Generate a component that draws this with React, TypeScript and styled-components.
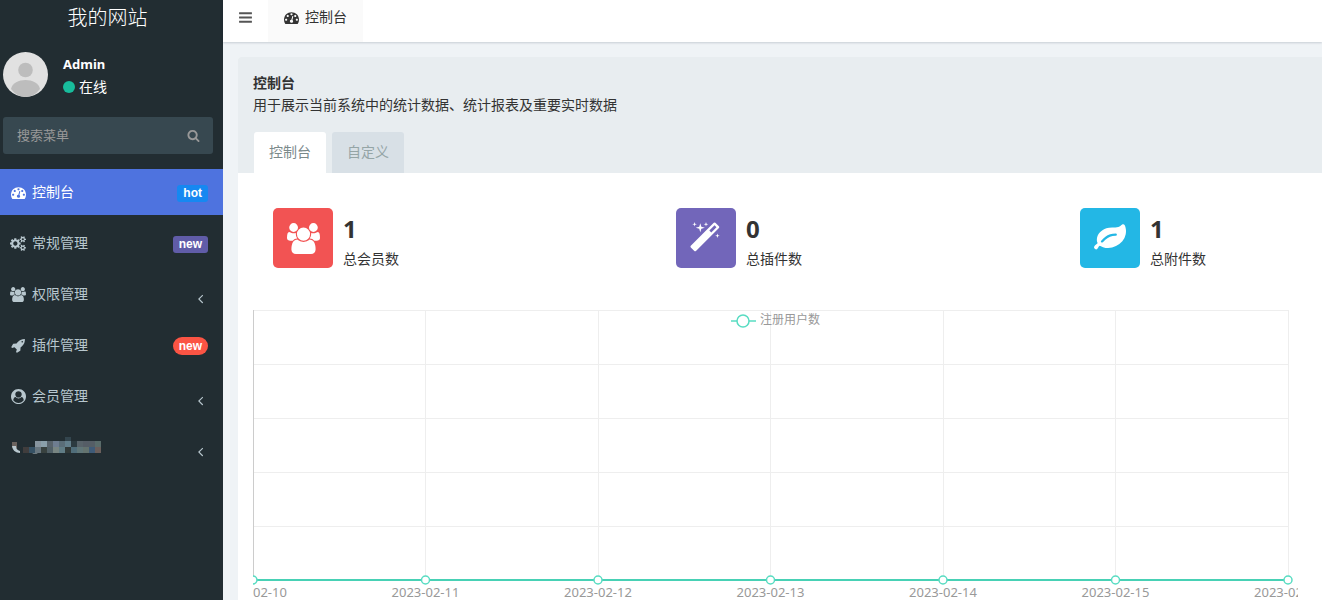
import React, { useEffect, useRef, useState } from "react";
import styled, { createGlobalStyle, css } from "styled-components";

const GlobalStyle = createGlobalStyle`
  * { box-sizing: border-box; }
  body {
    margin: 0;
    background: #eff3f6;
    color: #333;
    font-family: "Noto Sans", "Noto Sans CJK SC", sans-serif;
    font-size: 14px;
    line-height: 20px;
  }
  button, input { font-family: inherit; }
`;

const ICONS = {
  bars: "M1664 1344v128q0 26-19 45t-45 19h-1408q-26 0-45-19t-19-45v-128q0-26 19-45t45-19h1408q26 0 45 19t19 45zm0-512v128q0 26-19 45t-45 19h-1408q-26 0-45-19t-19-45v-128q0-26 19-45t45-19h1408q26 0 45 19t19 45zm0-512v128q0 26-19 45t-45 19h-1408q-26 0-45-19t-19-45v-128q0-26 19-45t45-19h1408q26 0 45 19t19 45z",
  search: "M1216 832q0-185-131.5-316.5t-316.5-131.5-316.5 131.5-131.5 316.5 131.5 316.5 316.5 131.5 316.5-131.5 131.5-316.5zm512 832q0 52-38 90t-90 38q-54 0-90-38l-343-342q-179 124-399 124-143 0-273.5-55.5t-225-150-150-225-55.5-273.5 55.5-273.5 150-225 225-150 273.5-55.5 273.5 55.5 225 150 150 225 55.5 273.5q0 220-124 399l343 343q37 37 37 90z",
  dashboard: "M384 1152q0-53-37.5-90.5t-90.5-37.5-90.5 37.5-37.5 90.5 37.5 90.5 90.5 37.5 90.5-37.5 37.5-90.5zm192-448q0-53-37.5-90.5t-90.5-37.5-90.5 37.5-37.5 90.5 37.5 90.5 90.5 37.5 90.5-37.5 37.5-90.5zm428 481l101-382q6-26-7.5-48.5t-38.5-29.5-48 6.5-30 39.5l-101 382q-60 5-107 43.5t-63 98.5q-20 77 20 146t117 89 146-20 89-117q16-60-6-117t-72-91zm660-33q0-53-37.5-90.5t-90.5-37.5-90.5 37.5-37.5 90.5 37.5 90.5 90.5 37.5 90.5-37.5 37.5-90.5zm-640-640q0-53-37.5-90.5t-90.5-37.5-90.5 37.5-37.5 90.5 37.5 90.5 90.5 37.5 90.5-37.5 37.5-90.5zm448 192q0-53-37.5-90.5t-90.5-37.5-90.5 37.5-37.5 90.5 37.5 90.5 90.5 37.5 90.5-37.5 37.5-90.5zm320 448q0 261-141 483-19 29-54 29h-1402q-35 0-54-29-141-221-141-483 0-182 71-348t191-286 286-191 348-71 348 71 286 191 191 286 71 348z",
  cogs: "M896 896q0-106-75-181t-181-75-181 75-75 181 75 181 181 75 181-75 75-181zm768 512q0-52-38-90t-90-38-90 38-38 90q0 53 37.5 90.5t90.5 37.5 90.5-37.5 37.5-90.5zm0-1024q0-52-38-90t-90-38-90 38-38 90q0 53 37.5 90.5t90.5 37.5 90.5-37.5 37.5-90.5zm-384 421v185q0 10-7 19.5t-16 10.5l-155 24q-11 35-32 76 34 48 90 115 7 10 7 20 0 12-7 19-23 30-82.5 89.5t-78.5 59.5q-11 0-21-7l-115-90q-37 19-77 31-11 108-23 155-7 24-30 24h-186q-11 0-20-7.5t-10-17.5l-23-153q-34-10-75-31l-118 89q-7 7-20 7-11 0-21-8-144-133-144-160 0-9 7-19 10-14 41-53t47-61q-23-44-35-82l-152-24q-10-1-17-9.5t-7-19.5v-185q0-10 7-19.5t16-10.5l155-24q11-35 32-76-34-48-90-115-7-11-7-20 0-12 7-20 22-30 82-89t79-59q11 0 21 7l115 90q34-18 77-32 11-108 23-154 7-24 30-24h186q11 0 20 7.5t10 17.5l23 153q34 10 75 31l118-89q8-7 20-7 11 0 21 8 144 133 144 160 0 9-7 19-12 16-42 54t-45 60q23 48 34 82l152 23q10 2 17 10.5t7 19.5zm640 533v140q0 16-149 31-12 27-30 52 51 113 51 138 0 4-4 7-122 71-124 71-8 0-46-47t-52-68q-20 2-30 2t-30-2q-14 21-52 68t-46 47q-2 0-124-71-4-3-4-7 0-25 51-138-18-25-30-52-149-15-149-31v-140q0-16 149-31 13-29 30-52-51-113-51-138 0-4 4-7 4-2 35-20t59-34 30-16q8 0 46 46.5t52 67.5q20-2 30-2t30 2q51-71 92-112l6-2q4 0 124 70 4 3 4 7 0 25-51 138 17 23 30 52 149 15 149 31zm0-1024v140q0 16-149 31-12 27-30 52 51 113 51 138 0 4-4 7-122 71-124 71-8 0-46-47t-52-68q-20 2-30 2t-30-2q-14 21-52 68t-46 47q-2 0-124-71-4-3-4-7 0-25 51-138-18-25-30-52-149-15-149-31v-140q0-16 149-31 13-29 30-52-51-113-51-138 0-4 4-7 4-2 35-20t59-34 30-16q8 0 46 46.5t52 67.5q20-2 30-2t30 2q51-71 92-112l6-2q4 0 124 70 4 3 4 7 0 25-51 138 17 23 30 52 149 15 149 31z",
  group: "M593 896q-162 5-265 128h-134q-82 0-138-40.5t-56-118.5q0-353 124-353 6 0 43.5 21t97.5 42.5 119 21.5q67 0 133-23-5 37-5 66 0 139 81 256zm1071 637q0 120-73 189.5t-194 69.5h-874q-121 0-194-69.5t-73-189.5q0-53 3.5-103.5t14-109 26.5-108.5 43-97.5 62-81 85.5-53.5 111.5-20q10 0 43 21.5t73 48 107 48 135 21.5 135-21.5 107-48 73-48 43-21.5q61 0 111.5 20t85.5 53.5 62 81 43 97.5 26.5 108.5 14 109 3.5 103.5zm-1024-1277q0 106-75 181t-181 75-181-75-75-181 75-181 181-75 181 75 75 181zm704 384q0 159-112.5 271.5t-271.5 112.5-271.5-112.5-112.5-271.5 112.5-271.5 271.5-112.5 271.5 112.5 112.5 271.5zm576 225q0 78-56 118.5t-138 40.5h-134q-103-123-265-128 81-117 81-256 0-29-5-66 66 23 133 23 59 0 119-21.5t97.5-42.5 43.5-21q124 0 124 353zm-128-609q0 106-75 181t-181 75-181-75-75-181 75-181 181-75 181 75 75 181z",
  rocket: "M1440 448q0-40-28-68t-68-28-68 28-28 68 28 68 68 28 68-28 28-68zm224-288q0 249-75.5 430.5t-253.5 360.5q-81 80-195 176l-20 379q-2 16-16 26l-384 224q-7 4-16 4-12 0-23-9l-64-64q-13-14-8-32l85-276-281-281-276 85q-3 1-9 1-14 0-23-9l-64-64q-17-19-5-39l224-384q10-14 26-16l379-20q96-114 176-195 188-187 358-258t431-71q14 0 24 9.5t10 22.5z",
  user: "M1523 1339q-22-155-87.5-257.5t-184.5-118.5q-67 74-159.5 115.5t-195.5 41.5-195.5-41.5-159.5-115.5q-119 16-184.5 118.5t-87.5 257.5q106 150 271 237.5t356 87.5 356-87.5 271-237.5zm-243-699q0-159-112.5-271.5t-271.5-112.5-271.5 112.5-112.5 271.5 112.5 271.5 271.5 112.5 271.5-112.5 112.5-271.5zm512 256q0 182-71 347.5t-190.5 286-285.5 191.5-349 71q-182 0-348-71t-286-191-191-286-71-348 71-348 191-286 286-191 348-71 348 71 286 191 191 286 71 348z",
  magic: "M1190 581l293-293-107-107-293 293zm447-293q0 27-18 45l-1286 1286q-18 18-45 18t-45-18l-198-198q-18-18-18-45t18-45l1286-1286q18-18 45-18t45 18l198 198q18 18 18 45zm-1351-190l98 30-98 30-30 98-30-98-98-30 98-30 30-98zm350 162l196 60-196 60-60 196-60-196-196-60 196-60 60-196zm930 478l98 30-98 30-30 98-30-98-98-30 98-30 30-98zm-640-640l98 30-98 30-30 98-30-98-98-30 98-30 30-98z",
  leaf: "M1280 704q0-26-19-45t-45-19q-172 0-318 49.5t-259.5 134-235.5 219.5q-19 21-19 45 0 26 19 45t45 19q24 0 45-19 27-24 74-71t67-66q137-124 268.5-176t313.5-52q26 0 45-19t19-45zm512-198q0 95-20 193-46 224-184.5 383t-357.5 268q-214 108-438 108-148 0-286-47-15-5-88-42t-96-37q-16 0-39.5 32t-45 70-52.5 70-60 32q-43 0-63.5-17.5t-45.5-59.5q-2-4-6-11t-5.5-10-3-9.5-1.5-13.5q0-35 31-73.5t68-65.5 68-56 31-48q0-4-14-38t-16-44q-9-51-9-104 0-115 43.5-220t119-184.5 170.5-139 204-95.5q55-18 145-25.5t179.5-9 178.5-6 163.5-24 113.5-56.5l29.5-29.5 29.5-28 27-20 36.5-16 43.5-4.5q39 0 70.5 46t47.5 112 24 124 8 96z",
  angle: "M1203 544q0 13-10 23l-393 393 393 393q10 10 10 23t-10 23l-50 50q-10 10-23 10t-23-10l-466-466q-10-10-10-23t10-23l466-466q10-10 23-10t23 10l50 50q10 10 10 23z",
};
type IconName = keyof typeof ICONS;

const IconSvg = styled.svg`
  display: block;
  flex: none;
  fill: currentColor;
`;

function Icon({ name, size = 14 }: { name: IconName; size?: number }) {
  const box = name === "cogs" || name === "group" ? 1920 : 1792;
  const width = Math.round((size * box) / 1792);
  return (
    <IconSvg width={width} height={size} viewBox={`0 0 ${box} 1792`} aria-hidden="true">
      <path d={ICONS[name]} />
    </IconSvg>
  );
}

const Page = styled.div`
  display: flex;
  min-height: 100vh;
`;

const Sidebar = styled.aside`
  flex: 0 0 223px;
  min-width: 0;
  background: #222d32;
  color: #fff;
`;

const Brand = styled.div`
  height: 52px;
  padding-right: 8px;
  text-align: center;
  font-size: 20px;
  font-weight: 300;
  line-height: 36px;
`;

const UserPanel = styled.div`
  display: flex;
  gap: 15px;
  height: 65px;
  padding-left: 3px;
`;

const Avatar = styled.svg`
  width: 45px;
  height: 45px;
  border-radius: 50%;
`;

const UserName = styled.div`
  font-size: 13px;
  font-weight: 700;
  line-height: 24px;
`;

const Status = styled.div`
  display: flex;
  align-items: center;
  gap: 4px;
  line-height: 22px;

  &::before {
    content: "";
    width: 12px;
    height: 12px;
    border-radius: 50%;
    background: #18bc9c;
  }
`;

const SearchForm = styled.form`
  display: flex;
  height: 37px;
  margin: 0 10px 15px 3px;
  border-radius: 3px;
  background: #374850;
  color: #999;
`;

const SearchInput = styled.input`
  flex: 1;
  min-width: 0;
  padding: 0 0 2px 14px;
  border: 0;
  outline: 0;
  background: transparent;
  color: #fff;
  font-size: 13px;

  &::placeholder { color: #999; }
`;

const SearchButton = styled.button`
  display: grid;
  place-items: center;
  width: 40px;
  padding: 0;
  border: 0;
  background: transparent;
  color: inherit;
`;

const Menu = styled.nav`
  display: flex;
  flex-direction: column;
  gap: 5px;
`;

const MenuItem = styled.a<{ $active?: boolean }>`
  display: flex;
  align-items: center;
  height: 46px;
  padding: 0 15px 0 10px;
  background: ${(p) => (p.$active ? "#4e73df" : "transparent")};
  color: ${(p) => (p.$active ? "#fff" : "#b8c7ce")};
  text-decoration: none;
`;

const MenuIcon = styled.span`
  display: grid;
  place-items: center;
  width: 16px;
  margin-right: 6px;
`;

const MenuTail = styled.span`
  margin: 2px 0 0 auto;
`;

const Arrow = styled.span`
  margin: 8px 0 0 auto;
`;

const Badge = styled.span<{ $color: string; $pill?: boolean }>`
  display: block;
  padding: 0 6px;
  border-radius: ${(p) => (p.$pill ? "9px" : "3px")};
  background: ${(p) => p.$color};
  color: #fff;
  font-family: "Liberation Sans", Arial, sans-serif;
  font-size: 12px;
  font-weight: 700;
  line-height: ${(p) => (p.$pill ? "18px" : "17px")};
`;

const Main = styled.main`
  display: flex;
  flex: 1;
  flex-direction: column;
  min-width: 0;
`;

const TopBar = styled.header`
  display: flex;
  height: 42px;
  background: #fff;
  box-shadow: 0 1px 2px rgba(0, 21, 41, 0.16);
`;

const topItem = css`
  display: flex;
  align-items: center;
  justify-content: center;
  gap: 6px;
  padding: 0 0 8px;
  border: 0;
`;

const MenuToggle = styled.button`
  ${topItem}
  width: 45px;
  background: transparent;
  color: #555;
`;

const PageTab = styled.a`
  ${topItem}
  width: 95px;
  background: #fafafa;
  color: #333;
  text-decoration: none;
`;

const Panel = styled.section`
  flex: 1;
  margin: 15px 0 0 15px;
  border-radius: 3px 0 0;
  background: #fff;
`;

const PanelHead = styled.div`
  padding: 15px 15px 0;
  border-radius: 3px 0 0;
  background: #e8edf0;
`;

const PanelTitle = styled.h1`
  margin: 0;
  font-size: 14px;
  line-height: 22px;
`;

const PanelLead = styled.p`
  margin: 0 0 16px;
  line-height: 22px;
`;

const Tabs = styled.div`
  display: flex;
  gap: 6px;
  padding-left: 1px;
`;

const Tab = styled.button<{ $active?: boolean }>`
  width: 72px;
  height: 41px;
  padding: 0 0 3px;
  border: 0;
  border-radius: 3px 3px 0 0;
  background: ${(p) => (p.$active ? "#fff" : "#d8e0e6")};
  color: ${(p) => (p.$active ? "#7b8a8b" : "#95a5a6")};
  font-size: 14px;
`;

const PanelBody = styled.div`
  padding: 35px 15px 0;
`;

const Stats = styled.div`
  display: grid;
  grid-template-columns: 403fr 404fr 227fr;
  padding-left: 20px;
  margin-bottom: 36px;
`;

const Stat = styled.div`
  display: flex;
  gap: 10px;
`;

const StatIcon = styled.div<{ $color: string }>`
  display: grid;
  place-items: center;
  width: 60px;
  height: 60px;
  border-radius: 5px;
  background: ${(p) => p.$color};
  color: #fff;
`;

const StatValue = styled.div`
  padding-top: 6px;
  font-size: 24px;
  font-weight: 700;
  line-height: 30px;
`;

const StatLabel = styled.div`
  line-height: 30px;
`;

const ChartBox = styled.div`
  height: 290px;
  margin-right: 9px;
  overflow: hidden;
`;

const ChartSvg = styled.svg`
  display: block;
  fill: #999;
`;

const DATES = ["10", "11", "12", "13", "14", "15", "16"].map((d) => `2023-02-${d}`);
const PLOT_HEIGHT = 270;
const ROW_HEIGHT = 54;

function RegistrationChart() {
  const box = useRef<HTMLDivElement>(null);
  const [width, setWidth] = useState(1045);

  useEffect(() => {
    const el = box.current;
    if (!el) return;
    const update = () => setWidth(el.clientWidth);
    update();
    const observer = new ResizeObserver(update);
    observer.observe(el);
    return () => observer.disconnect();
  }, []);

  const plot = width - 10;
  const x = (i: number) => (plot * i) / (DATES.length - 1);
  const middle = Math.round(width / 2);

  return (
    <ChartBox ref={box}>
      <ChartSvg width={width} height={290} role="img" aria-label="注册用户数">
        <g stroke="#eee" shapeRendering="crispEdges">
          {[0, 1, 2, 3, 4].map((r) => (
            <line key={r} x1={0} x2={plot} y1={r * ROW_HEIGHT + 0.5} y2={r * ROW_HEIGHT + 0.5} />
          ))}
          {DATES.map((d, i) => (
            <line
              key={d}
              x1={Math.floor(x(i)) + 0.5}
              x2={Math.floor(x(i)) + 0.5}
              y1={0}
              y2={PLOT_HEIGHT}
              stroke={i === 0 ? "#ccc" : "#eee"}
            />
          ))}
        </g>
        <line x1={0} x2={plot} y1={PLOT_HEIGHT} y2={PLOT_HEIGHT} stroke="#48d1b5" strokeWidth={2} />
        <g fill="#fff" stroke="#58dcc2" strokeWidth={1.5}>
          {DATES.map((d, i) => (
            <circle key={d} cx={x(i)} cy={PLOT_HEIGHT} r={4} />
          ))}
          <path d={`M${middle - 45} 11h25`} />
          <circle cx={middle - 33} cy={11} r={6} />
        </g>
        <text x={middle - 16} y={14} fontSize={12}>注册用户数</text>
        {DATES.map((d, i) => (
          <text key={d} x={x(i)} y={287} fontSize={13} textAnchor="middle">{d}</text>
        ))}
      </ChartSvg>
    </ChartBox>
  );
}

const MOSAIC = [
  { x: 24, y: 7, colors: ["#87949e", "#8a9faa", "#58636b", "#6e7d90", "#5a6d78", "#637f8c", "#2c3a40", "#58636a", "#555d66", "#555e66", "#5a6c6b"] },
  { x: 12, y: 13, colors: ["#403d3d", "#365164", "#68767f", "#38413f", "#516067", "#788582", "#607c85", "#313938", "#506d7a", "#607678", "#64736f", "#3f5b78", "#6b5f5c"] },
];

function ObscuredLabel() {
  return (
    <svg width="92" height="24" viewBox="-1 1 92 24" aria-hidden="true">
      <path d="M1 8h5v6H1z" fill="#6a625e" />
      <path d="M1 12q1 7 8 7v-2q-4-1-4-5z" fill="#b8c7ce" />
      <path d="M21 19q3 1 6 0z" fill="#b8c7ce" />
      <path d="M54 3h6v4h-6z" fill="#33454e" />
      {MOSAIC.flatMap((row) =>
        row.colors.map((fill, i) => (
          <rect key={`${row.y}-${i}`} x={row.x + i * 6} y={row.y} width="6" height="6" fill={fill} />
        )),
      )}
    </svg>
  );
}

interface MenuEntry {
  icon: IconName;
  label: string;
  badge?: { text: string; color: string; pill?: boolean };
}

const MENU: MenuEntry[] = [
  { icon: "dashboard", label: "控制台", badge: { text: "hot", color: "#1688f1" } },
  { icon: "cogs", label: "常规管理", badge: { text: "new", color: "#605ca8" } },
  { icon: "group", label: "权限管理" },
  { icon: "rocket", label: "插件管理", badge: { text: "new", color: "#fb5444", pill: true } },
  { icon: "user", label: "会员管理" },
];

const STATS: { icon: IconName; color: string; value: number; label: string }[] = [
  { icon: "group", color: "#f25353", value: 1, label: "总会员数" },
  { icon: "magic", color: "#7266ba", value: 0, label: "总插件数" },
  { icon: "leaf", color: "#23b7e5", value: 1, label: "总附件数" },
];

export default function App() {
  return (
    <Page>
      <GlobalStyle />
      <Sidebar>
        <Brand>我的网站</Brand>
        <UserPanel>
          <Avatar viewBox="0 0 45 45" aria-hidden="true">
            <rect width="45" height="45" fill="#e1e1e1" />
            <circle cx="22.5" cy="18" r="7.3" fill="#bdbdbd" />
            <path d="M8 37c1-6 8-9 14.500-9S36 31 37 37q-6 8-14.500 8T8 37z" fill="#bdbdbd" />
          </Avatar>
          <div>
            <UserName>Admin</UserName>
            <Status>在线</Status>
          </div>
        </UserPanel>
        <SearchForm>
          <SearchInput type="text" placeholder="搜索菜单" aria-label="搜索菜单" />
          <SearchButton type="button" aria-label="搜索">
            <Icon name="search" size={13} />
          </SearchButton>
        </SearchForm>
        <Menu>
          {MENU.map(({ icon, label, badge }, i) => (
            <MenuItem key={label} href="#" $active={i === 0}>
              <MenuIcon><Icon name={icon} size={15} /></MenuIcon>
              {label}
              {badge ? (
                <MenuTail>
                  <Badge $color={badge.color} $pill={badge.pill}>{badge.text}</Badge>
                </MenuTail>
              ) : (
                <Arrow><Icon name="angle" size={15} /></Arrow>
              )}
            </MenuItem>
          ))}
          <MenuItem href="#" aria-label="菜单">
            <ObscuredLabel />
            <Arrow><Icon name="angle" size={15} /></Arrow>
          </MenuItem>
        </Menu>
      </Sidebar>
      <Main>
        <TopBar>
          <MenuToggle type="button" aria-label="切换菜单"><Icon name="bars" size={15} /></MenuToggle>
          <PageTab href="#"><Icon name="dashboard" size={15} />控制台</PageTab>
        </TopBar>
        <Panel>
          <PanelHead>
            <PanelTitle>控制台</PanelTitle>
            <PanelLead>用于展示当前系统中的统计数据、统计报表及重要实时数据</PanelLead>
            <Tabs role="tablist">
              <Tab type="button" role="tab" aria-selected $active>控制台</Tab>
              <Tab type="button" role="tab" aria-selected={false}>自定义</Tab>
            </Tabs>
          </PanelHead>
          <PanelBody>
            <Stats>
              {STATS.map((s) => (
                <Stat key={s.label}>
                  <StatIcon $color={s.color}><Icon name={s.icon} size={s.icon === "group" ? 31 : 32} /></StatIcon>
                  <div>
                    <StatValue>{s.value}</StatValue>
                    <StatLabel>{s.label}</StatLabel>
                  </div>
                </Stat>
              ))}
            </Stats>
            <RegistrationChart />
          </PanelBody>
        </Panel>
      </Main>
    </Page>
  );
}
